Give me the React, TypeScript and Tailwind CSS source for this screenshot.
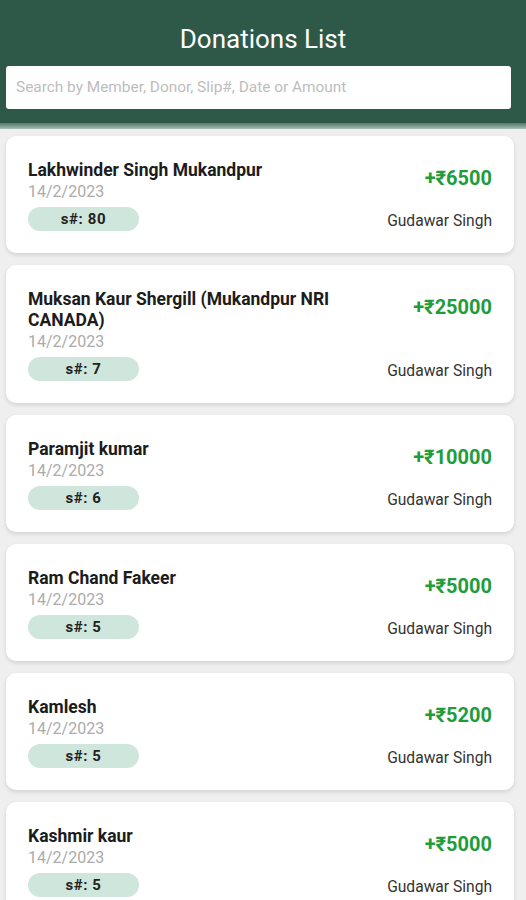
import React from "react";

type Donation = {
  id: number;
  name: string;
  date: string;
  slip: string;
  amount: string;
  member: string;
};

const donations: Donation[] = [
  { id: 1, name: "Lakhwinder Singh Mukandpur", date: "14/2/2023", slip: "80", amount: "6500", member: "Gudawar Singh" },
  { id: 2, name: "Muksan Kaur Shergill (Mukandpur NRI CANADA)", date: "14/2/2023", slip: "7", amount: "25000", member: "Gudawar Singh" },
  { id: 3, name: "Paramjit kumar", date: "14/2/2023", slip: "6", amount: "10000", member: "Gudawar Singh" },
  { id: 4, name: "Ram Chand Fakeer", date: "14/2/2023", slip: "5", amount: "5000", member: "Gudawar Singh" },
  { id: 5, name: "Kamlesh", date: "14/2/2023", slip: "5", amount: "5200", member: "Gudawar Singh" },
  { id: 6, name: "Kashmir kaur", date: "14/2/2023", slip: "5", amount: "5000", member: "Gudawar Singh" },
];

function DonationCard({ item }: { item: Donation }) {
  return (
    <div className="flex justify-between rounded-[10px] bg-white pt-[24px] pb-[22px] pl-[22px] pr-[22px] shadow-[0_2px_4px_rgba(0,0,0,0.12)]">
      <div className="flex max-w-[345px] flex-col">
        <h3 className="text-[17.5px] leading-[21px] font-bold text-[#1c1c1c]">{item.name}</h3>
        <p className="text-[16px] leading-[22px] text-[#ababab]">{item.date}</p>
        <div className="mt-[4px] flex h-[24px] w-[111px] items-center justify-center rounded-full bg-[#cfe6dd] text-[15px] font-bold tracking-[0.6px] text-[#222]">
          s#: {item.slip}
        </div>
      </div>
      <div className="flex flex-col items-end justify-between pt-[6px] pb-[1px]">
        <span className="text-[20px] leading-[24px] font-bold text-[#1f9c3c]">+₹{item.amount}</span>
        <span className="text-[15.6px] leading-[18px] text-[#333]">{item.member}</span>
      </div>
    </div>
  );
}

export default function App() {
  return (
    <div
      className="min-h-[900px] bg-[#efefef]"
      style={{ fontFamily: "Roboto, 'Noto Sans', sans-serif" }}
    >
      {/* header */}
      <div className="bg-[#2e5949] pt-[23px] pb-[14px]">
        <h1 className="text-center text-[26px] leading-[32px] text-white">Donations List</h1>
        <div className="mt-[11px] ml-[6px] flex h-[43px] w-[505px] items-center rounded-[3px] bg-white px-[10px]">
          <input
            className="w-full bg-transparent text-[15.4px] text-[#333] outline-none placeholder:text-[#bdbdbd]"
            placeholder="Search by Member, Donor, Slip#, Date or Amount"
          />
        </div>
      </div>
      <div className="h-[6px] bg-gradient-to-b from-[#4f7a6a] to-[#a9bfb6]" />

      {/* list */}
      <div className="flex flex-col gap-[12px] px-[6px] pt-[7px] pr-[12px]">
        {donations.map((d) => (
          <DonationCard key={d.id} item={d} />
        ))}
      </div>
    </div>
  );
}
